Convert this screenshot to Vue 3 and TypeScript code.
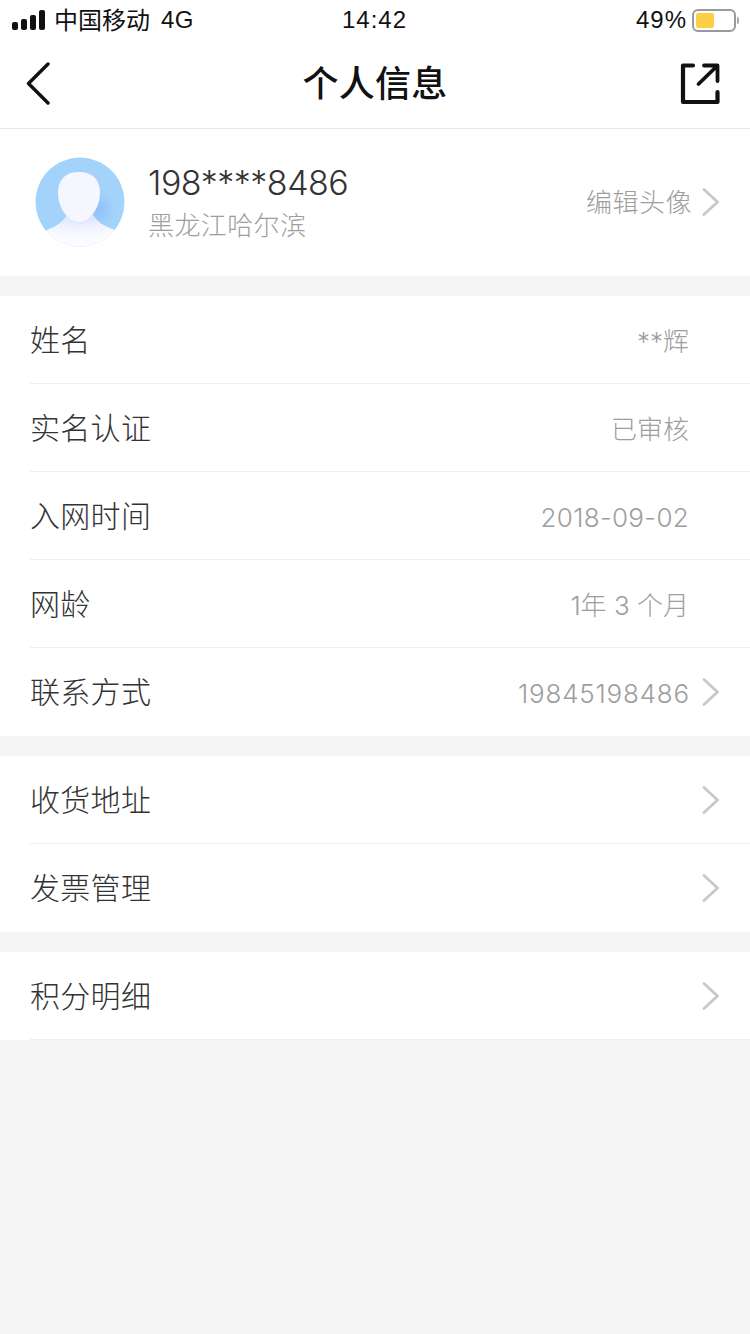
<script setup lang="ts">
interface Row { label: string; value?: string; arrow?: boolean; }
const groups: Row[][] = [
  [
    { label: '姓名', value: '**辉' },
    { label: '实名认证', value: '已审核' },
    { label: '入网时间', value: '2018-09-02' },
    { label: '网龄', value: '1年 3 个月' },
    { label: '联系方式', value: '19845198486', arrow: true },
  ],
  [
    { label: '收货地址', arrow: true },
    { label: '发票管理', arrow: true },
  ],
  [{ label: '积分明细', arrow: true }],
];
const bars = [8, 11, 15, 20];
const isNumeric = (v: string): boolean => /^[\d-]+$/.test(v);
</script>

<template>
  <div class="page">
    <header class="status">
      <div class="status-left">
        <div class="signal"><i v-for="h in bars" :key="h" class="bar" :style="{ height: h + 'px' }"></i></div>
        <span class="carrier">中国移动</span>
        <span class="net">4G</span>
      </div>
      <span class="clock">14:42</span>
      <div class="status-right">
        <span>49%</span>
        <div class="battery"><div class="level"></div></div>
        <div class="cap"></div>
      </div>
    </header>

    <nav class="nav">
      <svg class="back" width="26" height="44" viewBox="0 0 26 44" fill="none">
        <path d="M23 2 L3.500 21.500 L23 41" stroke="#111" stroke-width="3.400" stroke-linecap="round" stroke-linejoin="round" />
      </svg>
      <h1 class="title">个人信息</h1>
      <svg class="share" width="40" height="42" viewBox="0 0 40 42" fill="none">
        <path d="M13 2.500 H3 V39 H37.500 V29" stroke="#111" stroke-width="4.200" stroke-linecap="round" stroke-linejoin="round" />
        <path d="M18.500 21 L36 4 M24 2.500 H37.500 V18" stroke="#111" stroke-width="3.800" stroke-linecap="round" stroke-linejoin="round" fill="none" />
      </svg>
    </nav>

    <section class="profile">
      <svg class="avatar" width="90" height="90" viewBox="0 0 90 90">
        <defs>
          <clipPath id="circle"><circle cx="45" cy="45" r="44.500" /></clipPath>
          <radialGradient id="neck" cx="0.500" cy="0.050" r="0.700">
            <stop offset="0" stop-color="#d5def9" />
            <stop offset="0.500" stop-color="#f0f3fe" />
            <stop offset="1" stop-color="#fbfcff" />
          </radialGradient>
          <radialGradient id="shade" cx="0.500" cy="0.500" r="0.500">
            <stop offset="0" stop-color="#8fbff7" />
            <stop offset="1" stop-color="#a3d3fb" />
          </radialGradient>
          <filter id="soft" x="-10%" y="-10%" width="120%" height="120%"><feGaussianBlur stdDeviation="0.500" /></filter>
        </defs>
        <g clip-path="url(#circle)">
          <rect width="90" height="90" fill="#a3d3fb" />
          <ellipse cx="62" cy="52" rx="18" ry="20" fill="url(#shade)" />
          <path d="M0 78 L12 73 Q26 68 32 58 H58 Q64 68 80 73 L90 78 V90 H0 Z" fill="url(#neck)" />
          <path d="M44 15 C31 15 23 22 23 36 C23 50 32 62 39 64 Q44 66 49 64 C56 62 65 50 65 36 C65 22 57 15 44 15 Z" fill="#f5f6fe" filter="url(#soft)" />
        </g>
      </svg>
      <div class="identity">
        <div class="phone">198****8486</div>
        <div class="region">黑龙江哈尔滨</div>
      </div>
      <span class="edit">编辑头像</span>
      <svg class="chev" width="18" height="28" viewBox="0 0 18 28" fill="none">
        <path d="M2 1.500 L15.500 14 L2 26.500" stroke="#c8c8c8" stroke-width="2.800" stroke-linecap="round" stroke-linejoin="round" />
      </svg>
    </section>

    <section v-for="(group, g) in groups" :key="g" class="group">
      <div v-for="row in group" :key="row.label" class="row">
        <span class="label">{{ row.label }}</span>
        <span v-if="row.value" class="value" :class="{ numeric: isNumeric(row.value) }">{{ row.value }}</span>
        <svg v-if="row.arrow" class="chev" width="18" height="28" viewBox="0 0 18 28" fill="none">
          <path d="M2 1.500 L15.500 14 L2 26.500" stroke="#c8c8c8" stroke-width="2.800" stroke-linecap="round" stroke-linejoin="round" />
        </svg>
        <span v-else class="chev-space"></span>
      </div>
    </section>
  </div>
</template>

<style>
html, body { margin: 0; background: #f5f5f5; }
</style>

<style scoped>
.page {
  width: 750px;
  height: 1334px;
  background: #f5f5f5;
  font-family: "Liberation Sans", "Noto Sans CJK SC", sans-serif;
  overflow: hidden;
}
.status {
  height: 40px;
  background: #fff;
  position: relative;
  display: flex;
  align-items: center;
  justify-content: space-between;
  padding: 0 11px 0 12px;
  color: #111;
  font-size: 24px;
  box-sizing: border-box;
}
.status-left { display: flex; align-items: center; }
.signal { display: flex; align-items: flex-end; gap: 3px; margin-right: 9px; }
.bar { display: block; width: 6px; background: #111; border-radius: 2px; }
.carrier { margin-bottom: 4px; }
.net { margin-left: 11px; letter-spacing: 0.500px; }
.clock { position: absolute; left: 342px; letter-spacing: 1px; }
.status-right { display: flex; align-items: center; }
.status-right span { letter-spacing: 1px; }
.battery {
  width: 44px;
  height: 23px;
  margin-left: 5px;
  box-sizing: border-box;
  border: 2px solid #9a9a9a;
  border-radius: 6px;
  padding: 2px;
}
.level { width: 18px; height: 15px; background: #fccf45; border-radius: 2px; }
.cap { width: 2px; height: 7px; margin-left: 1px; background: #a8a8a8; border-radius: 0 2px 2px 0; }

.nav {
  height: 89px;
  background: #fff;
  border-bottom: 1px solid #e8e8e8;
  box-sizing: border-box;
  display: flex;
  align-items: center;
  justify-content: space-between;
  padding: 0 30px 0 25px;
  position: relative;
}
.title {
  position: absolute;
  left: 0;
  right: 0;
  margin: 0;
  padding-bottom: 6px;
  text-align: center;
  font-size: 36px;
  font-weight: 500;
  color: #111;
  letter-spacing: 0.200px;
}
.profile {
  height: 147px;
  background: #fff;
  display: flex;
  align-items: center;
  padding: 0 30px 2px 35px;
  box-sizing: border-box;
}
.avatar { flex: none; }
.identity { margin-left: 23px; flex: 1; margin-top: 4px; }
.phone { font-family: Inter, "Noto Sans CJK SC", sans-serif; font-size: 34px; line-height: 44px; color: #333; font-weight: 300; letter-spacing: -0.500px; margin-top: -1px; margin-bottom: 2px; }
.region { font-size: 26px; line-height: 38px; color: #9e9e9e; margin-top: 2px; font-weight: 300; letter-spacing: 0.400px; }
.edit { font-size: 26px; color: #9e9e9e; font-weight: 300; letter-spacing: 0.500px; margin-bottom: 2px; }
.chev { flex: none; margin-left: 10px; }
.group { background: #fff; margin-top: 20px; }
.row {
  height: 88px;
  margin-left: 30px;
  padding-right: 30px;
  box-sizing: border-box;
  border-bottom: 1px solid #eeeeee;
  display: flex;
  align-items: center;
  justify-content: space-between;
}
.group:not(:last-of-type) .row:last-child { border-bottom: none; }
.label { font-size: 30px; color: #333; flex: 1; font-weight: 300; margin-bottom: 4px; letter-spacing: 0.300px; }
.value { font-family: Inter, "Noto Sans CJK SC", sans-serif; font-size: 26px; color: #9e9e9e; font-weight: 300; margin-right: 2px; }
.numeric { margin-top: 3px; letter-spacing: 0.300px; }
.numeric:has(+ .chev) { letter-spacing: 0.800px; }
.value + .chev { margin-left: 10px; }
.chev-space { width: 18px; margin-left: 11px; flex: none; }
</style>
